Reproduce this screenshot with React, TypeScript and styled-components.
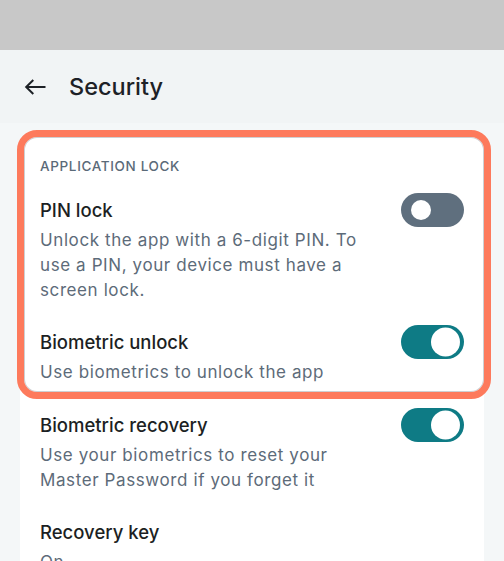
import React from "react";
import styled, { createGlobalStyle } from "styled-components";

const Global = createGlobalStyle`
  html, body { margin: 0; padding: 0; }
  body {
    background: #f4f7f8;
    font-family: Inter, Roboto, "Noto Sans", Arial, sans-serif;
    -webkit-font-smoothing: antialiased;
  }
`;

const Screen = styled.div`
  width: 504px;
  height: 561px;
  overflow: hidden;
  display: flex;
  flex-direction: column;
  background: #f4f7f8;
`;

const StatusBar = styled.div`
  height: 50px;
  flex: none;
  background: #c8c8c8;
`;

const AppBar = styled.header`
  height: 73px;
  flex: none;
  background: #f1f4f5;
  display: flex;
  align-items: center;
  padding: 0 0 0 24px;
  gap: 23px;
`;

const BackButton = styled.button`
  border: 0;
  background: none;
  padding: 0;
  width: 22px;
  height: 16px;
  display: flex;
  color: #1d2126;
  margin-top: 1px;
`;

const Title = styled.h1`
  margin: 0;
  font-size: 23.5px;
  font-weight: 500;
  color: #1d2126;
  line-height: 30px;
`;

const Content = styled.main`
  padding: 7px 20px 0;
`;

const Card = styled.section`
  background: #ffffff;
  border-radius: 16px 16px 0 0;
  display: flex;
  flex-direction: column;
`;

const Group = styled.div`
  position: relative;
  padding: 26px 0 14px;
  display: flex;
  flex-direction: column;
  gap: 25px;

  &::after {
    content: "";
    position: absolute;
    top: 0;
    bottom: 0;
    left: -3px;
    right: -7px;
    border: 7px solid #fd7a5c;
    border-radius: 20px;
    box-shadow: inset 0 0 0 1px rgba(90, 100, 110, 0.3);
    pointer-events: none;
  }
`;

const SectionLabel = styled.div`
  padding: 0 20px;
  font-size: 13.5px;
  line-height: 20px;
  font-weight: 500;
  letter-spacing: 0.65px;
  color: #5a6a78;
  text-transform: uppercase;
  margin-bottom: -5px;
`;

const List = styled.div`
  padding-top: 12px;
  display: flex;
  flex-direction: column;
  gap: 25px;
`;

const Row = styled.div`
  display: flex;
  align-items: flex-start;
  padding: 0 20px;
  gap: 16px;
`;

const RowText = styled.div`
  flex: 1;
  min-width: 0;
`;

const RowTitle = styled.div`
  font-size: 18.5px;
  line-height: 28px;
  font-weight: 500;
  color: #1c1f23;
`;

const RowDesc = styled.div`
  margin-top: 4px;
  font-size: 17px;
  line-height: 25px;
  letter-spacing: 0.6px;
  color: #5d6b79;
`;

const Track = styled.button<{ $on: boolean }>`
  flex: none;
  position: relative;
  width: 63px;
  height: 34px;
  margin-top: -3px;
  border: 0;
  padding: 0;
  border-radius: 17px;
  background: ${(p) => (p.$on ? "#0e7b85" : "#5f6f7e")};
`;

const Thumb = styled.span<{ $on: boolean }>`
  position: absolute;
  top: 50%;
  transform: translateY(-50%);
  border-radius: 50%;
  background: #ffffff;
  width: ${(p) => (p.$on ? 29 : 20)}px;
  height: ${(p) => (p.$on ? 29 : 20)}px;
  left: ${(p) => (p.$on ? 30 : 10)}px;
`;

function Switch({ on }: { on: boolean }) {
  return (
    <Track $on={on} role="switch" aria-checked={on}>
      <Thumb $on={on} />
    </Track>
  );
}

type Item = { title: string; desc: string; toggle?: boolean };

function SettingRow({ title, desc, toggle }: Item) {
  return (
    <Row>
      <RowText>
        <RowTitle>{title}</RowTitle>
        <RowDesc>{desc}</RowDesc>
      </RowText>
      {toggle !== undefined && <Switch on={toggle} />}
    </Row>
  );
}

export default function App() {
  return (
    <>
      <Global />
      <Screen>
        <StatusBar />
        <AppBar>
          <BackButton aria-label="Back">
            <svg width="22" height="16" viewBox="0 0 22 16" fill="none">
              <path
                d="M21.5 8H2.2M9.3 1L2.2 8l7.1 7"
                stroke="currentColor"
                strokeWidth="2"
              />
            </svg>
          </BackButton>
          <Title>Security</Title>
        </AppBar>
        <Content>
          <Card>
            <Group>
              <SectionLabel>Application lock</SectionLabel>
              <SettingRow
                title="PIN lock"
                desc="Unlock the app with a 6-digit PIN. To use a PIN, your device must have a screen lock."
                toggle={false}
              />
              <SettingRow
                title="Biometric unlock"
                desc="Use biometrics to unlock the app"
                toggle={true}
              />
            </Group>
            <List>
              <SettingRow
                title="Biometric recovery"
                desc="Use your biometrics to reset your Master Password if you forget it"
                toggle={true}
              />
              <SettingRow title="Recovery key" desc="On" />
            </List>
          </Card>
        </Content>
      </Screen>
    </>
  );
}
